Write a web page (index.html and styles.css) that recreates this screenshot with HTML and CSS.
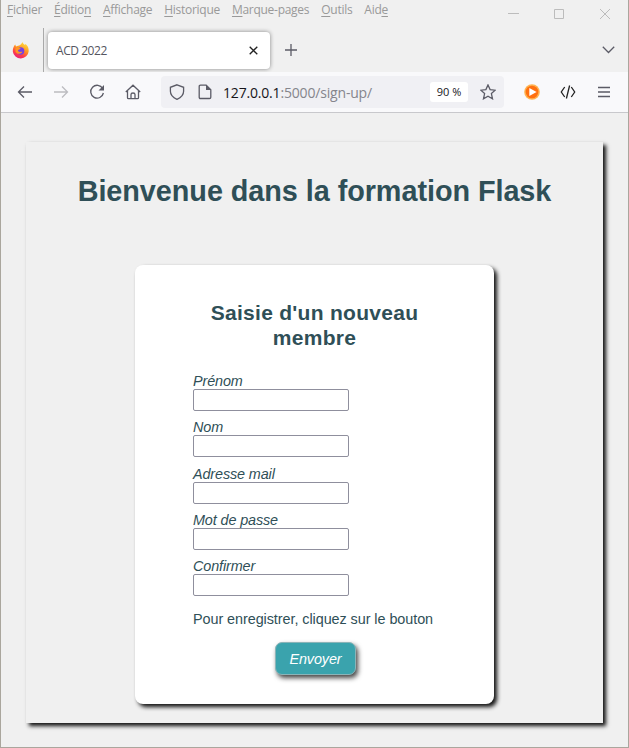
FILE: index.html
```html
<!DOCTYPE html>
<html lang="fr">
<head>
<meta charset="utf-8">
<title>ACD 2022</title>
<link rel="stylesheet" href="styles.css">
</head>
<body>
<div class="window">
  <header class="titlebar">
    <nav class="menu">
      <span><u>F</u>ichier</span><span><u>É</u>ditio<u>n</u></span><span><u>A</u>ffichage</span><span><u>H</u>istorique</span><span><u>M</u>arque-pages</span><span><u>O</u>utils</span><span>Aid<u>e</u></span>
    </nav>
    <svg class="controls" width="104" height="12" viewBox="0 0 104 12"><path d="M0 5.500h11M46.500 1.500h9v9h-9zM92 1l10 10M102 1l-10 10"/></svg>
  </header>
  <div class="tabs">
    <div class="pinned">
      <svg width="18" height="18" viewBox="0 0 18 18">
        <defs><linearGradient id="fire" x1=".8" y1="0" x2=".3" y2="1"><stop offset="0" stop-color="#ffe747"/><stop offset=".45" stop-color="#ff9522"/><stop offset=".75" stop-color="#ff3c4b"/><stop offset="1" stop-color="#e8207a"/></linearGradient></defs>
        <path fill="url(#fire)" d="M10.500 0c.3 1.600 1.500 2 2.300 3l.8-1c2.200 1.700 3.200 4.200 3.100 7.200a8 8 0 0 1-15.900.3C.7 6.300 1.800 4.200 3.200 2.500l.8 2 2-.8C7.500 3.500 9.500 2.500 10.500 0z"/>
        <circle cx="8.600" cy="9" r="3.700" fill="#7542e5"/>
        <path fill="#ff9822" d="M3.500 6c2-1.500 4-.8 5.300.7l-2.300 1c-.7.400-.7 1.500.2 1.900 1.400.8 2.600-.3 3.800.2-1 2.300-5 3-7 .1z"/>
      </svg>
    </div>
    <div class="tab"><span>ACD 2022</span><svg width="9" height="9" viewBox="0 0 9 9"><path d="M.7.7l7.600 7.600M8.300.7L.7 8.300"/></svg></div>
    <svg class="plus" width="12" height="12" viewBox="0 0 12 12"><path d="M6 0v12M0 6h12"/></svg>
    <svg class="chevron" width="13" height="8" viewBox="0 0 13 8"><path d="M.8.8l5.700 5.700L12.200.8"/></svg>
  </div>
  <div class="toolbar">
    <svg class="tool" viewBox="0 0 16 16"><path d="M15 8H1.500M7 2.500L1.500 8 7 13.500"/></svg>
    <svg class="tool disabled" viewBox="0 0 16 16"><path d="M1 8h13.500M9 2.500L14.500 8 9 13.500"/></svg>
    <svg class="tool" viewBox="0 0 16 16"><path d="M13.700 4.500A6.400 6.400 0 1 0 14.400 9"/><path class="solid" d="M15 1v5.500H9.500z"/></svg>
    <svg class="tool" viewBox="0 0 16 16"><path d="M.8 8L8 1.200 15.200 8M2.500 7v6.700q0 1 1 1h9q1 0 1-1V7M6 14.500v-4q0-1.500 2-1.500t2 1.500v4"/></svg>
    <div class="address">
      <svg class="tool" viewBox="0 0 16 16"><path d="M8 .8l6.600 2.500v4c0 3.200-2.400 6.200-6.600 8-4.200-1.800-6.600-4.800-6.600-8v-4z"/></svg>
      <svg class="tool page-icon" viewBox="0 0 16 16"><path d="M3.500 1.200h5.700l4.600 4.500v7.500q0 1.300-1.300 1.300h-9q-1.300 0-1.300-1.300V2.500q0-1.300 1.300-1.300z"/><path class="solid" d="M9 1v5h5z"/></svg>
      <span class="url"><b>127.0.0.1</b>:5000/sign-up/</span>
      <span class="zoom">90 %</span>
      <svg class="tool" viewBox="0 0 16 16"><path d="M8 .9l2.100 4.700 5.100.6-3.800 3.400 1.100 5.200L8 12.200l-4.500 2.600 1.100-5.200L.8 6.200l5.100-.6z"/></svg>
    </div>
    <svg class="tool play" viewBox="0 0 16 16"><circle cx="8" cy="8" r="7.800" fill="#ffb34f"/><circle cx="8" cy="8" r="6.300" fill="#ff7010"/><path fill="#fff" d="M5.300 3.900v8.200L12.600 8z"/></svg>
    <svg class="tool code" viewBox="0 0 16 16"><path d="M4.700 3L1.300 8l3.400 5M11.300 3l3.400 5-3.400 5M9.600 1.500L6.400 14.500"/></svg>
    <svg class="tool hamburger" viewBox="0 0 16 16"><path d="M2 3.500h12M2 8h12M2 12.500h12"/></svg>
  </div>
  <main class="page">
    <section class="panel">
      <h1>Bienvenue dans la formation Flask</h1>
      <form class="card">
        <h2>Saisie d'un nouveau membre</h2>
        <label>Prénom<input type="text"></label>
        <label>Nom<input type="text"></label>
        <label>Adresse mail<input type="text"></label>
        <label>Mot de passe<input type="password"></label>
        <label>Confirmer<input type="password"></label>
        <p>Pour enregistrer, cliquez sur le bouton</p>
        <button type="button">Envoyer</button>
      </form>
    </section>
  </main>
</div>
</body>
</html>
```
FILE: styles.css
```css
* { box-sizing: border-box; }
body { margin: 0; background: #f0f0f0; color: #2f4f57; font-family: "Liberation Sans", Arial, sans-serif; }
svg { display: block; flex: none; fill: none; stroke: #5b5b66; stroke-width: 1.3; }
.window { width: 629px; height: 748px; overflow: hidden; border: 1px solid #aaa69d; border-top: 0; display: flex; flex-direction: column; }
.titlebar { height: 28px; display: flex; justify-content: space-between; padding: 0 16px 0 6px; }
.menu { display: flex; gap: 12px; font: 12px/20px "Open Sans", "Noto Sans", sans-serif; color: #999; letter-spacing: -0.28px; white-space: nowrap; }
.menu u { text-underline-offset: 2px; }
.controls { margin-top: 8px; stroke: #bcbcbc; stroke-width: 1; }
.tabs { height: 44px; display: flex; align-items: center; }
.pinned { width: 43px; height: 44px; border-right: 1px solid #aaa; padding: 14px 0 0 11px; }
.pinned svg { stroke: none; }
.tab { width: 222px; height: 37px; margin-left: 4px; padding: 0 12px 0 8px; border-radius: 4px; background: #fff; box-shadow: 0 0 4px rgba(0,0,0,.45); display: flex; align-items: center; justify-content: space-between; font: 12px "Open Sans", sans-serif; letter-spacing: -.45px; color: #555560; }
.tab svg { stroke: #222; }
.plus { margin-left: 15px; }
.chevron { margin: 0 13px 0 auto; }
.toolbar { height: 41px; background: #f9f9fb; border-bottom: 1px solid #c8c8cc; display: flex; align-items: center; padding: 0 16px; gap: 20px; }
.tool { width: 16px; height: 16px; }
.disabled { stroke: #bcbcc0; }
.solid { fill: #5b5b66; stroke: none; }
.address { width: 344px; height: 32px; border-radius: 4px; background: #f0f0f4; padding: 0 8px; display: flex; align-items: center; }
.toolbar > .play { margin-left: auto; }
.page-icon { margin-left: 12px; }
.url { margin-left: 10px; font: 14px "Open Sans", sans-serif; color: #85858c; letter-spacing: -.18px; white-space: nowrap; }
.url b { font-weight: 400; color: #15141a; }
.zoom { margin: 0 12px 0 auto; width: 38px; height: 20px; border-radius: 3px; background: #fff; font: 11px/20px "Open Sans", sans-serif; text-align: center; color: #15141a; white-space: nowrap; }
.play { stroke: none; }
.code { stroke: #222; }
.page { flex: 1; padding: 29px 24px 24px 25px; }
.panel { width: 577px; height: 581px; padding-top: 32px; box-shadow: 3px 3px 4px #111; }
h1 { margin: 0; font-size: 28.800px; line-height: 34px; text-align: center; letter-spacing: -.05px; white-space: nowrap; }
.card { width: 359px; height: 439px; margin: 57px 0 0 109px; padding: 35px 58px 0; border-radius: 8px; background: #fff; box-shadow: 3px 3px 4px #111; display: flex; flex-direction: column; }
h2 { margin: 0 0 23px; font-size: 21px; line-height: 25px; text-align: center; letter-spacing: .28px; }
label { display: block; height: 46.250px; flex: none; font-size: 14.400px; line-height: 16px; font-style: italic; letter-spacing: -.12px; }
input { display: block; width: 156px; height: 22px; margin: 0; border: 1px solid #8f8f9d; border-radius: 2px; background: #fff; }
p { margin: 7px 0 0; font-size: 14.400px; line-height: 17px; letter-spacing: -.06px; white-space: nowrap; }
button { width: 81px; height: 33px; flex: none; margin: 14px 0 0 82px; padding: 0; border: 1px solid #8ab4b8; border-radius: 7px; background: #3aa3ad; color: #fff; font: italic 14.400px "Liberation Sans", Arial, sans-serif; letter-spacing: -.1px; box-shadow: 2px 3px 5px #444; }
```
